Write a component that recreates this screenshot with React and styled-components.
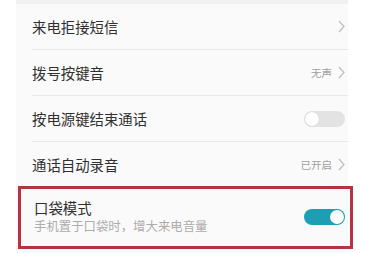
import React from 'react'
import styled, { createGlobalStyle } from 'styled-components'

const GlobalStyle = createGlobalStyle`
html, body {
  margin: 0;
  padding: 0;
  background: #ffffff;
}
body {
  font-family: "Noto Sans CJK SC", "Noto Sans", sans-serif;
}
`

const Page = styled.div`
position: relative;
width: 380px;
height: 253px;
overflow: hidden;
background: #ffffff;
`
const Panel = styled.div`
margin-left: 16px;
width: 332px;
height: 253px;
background: #fafafa;
`
const TopStrip = styled.div`
height: 4px;
background: #f1f1f1;
`
const Row = styled.div`
display: flex;
align-items: center;
justify-content: space-between;
height: 45px;
margin-left: 16px;
padding-right: 3px;
border-bottom: ${props => (props.last ? 'none' : '1px solid #e8e8e8')};
`
const TallRow = styled.div`
display: flex;
align-items: center;
justify-content: space-between;
margin-left: 18px;
padding: 11px 3px 0 0;
`
const TextBlock = styled.div`
display: flex;
flex-direction: column;
`
const Title = styled.div`
font-size: 14.4px;
line-height: 20px;
color: #303030;
`
const Subtitle = styled.div`
font-size: 12.4px;
line-height: 17px;
color: #acacac;
`
const Right = styled.div`
display: flex;
align-items: center;
gap: 6px;
`
const Value = styled.span`
font-size: 10.5px;
color: #a0a0a0;
`
const Switch = styled.div`
position: relative;
width: 41px;
height: 16px;
border-radius: 8px;
background: ${props => (props.on ? '#1c9fb3' : '#e3e3e3')};
`
const Knob = styled.div`
position: absolute;
top: 1px;
${props => (props.on ? 'right: 1px;' : 'left: 1px;')}
width: 14px;
height: 14px;
border-radius: 50%;
background: #ffffff;
box-shadow: 0 0 1px rgba(0, 0, 0, 0.2);
`
const Highlight = styled.div`
position: absolute;
left: 18px;
top: 186px;
width: 329px;
height: 57px;
border: 3px solid #b9333f;
pointer-events: none;
`

const Chevron = () => (
  <svg width="7" height="13" viewBox="0 0 7 13">
    <path d="M1 1 L6 6.5 L1 12" fill="none" stroke="#bcbcbc" strokeWidth="1.2" />
  </svg>
)

const App = () => {
  return (
    <Page>
      <GlobalStyle />
      <Panel>
        <TopStrip />
        <Row>
          <Title>来电拒接短信</Title>
          <Right><Chevron /></Right>
        </Row>
        <Row>
          <Title>拨号按键音</Title>
          <Right><Value>无声</Value><Chevron /></Right>
        </Row>
        <Row>
          <Title>按电源键结束通话</Title>
          <Switch><Knob /></Switch>
        </Row>
        <Row last>
          <Title>通话自动录音</Title>
          <Right><Value>已开启</Value><Chevron /></Right>
        </Row>
        <TallRow>
          <TextBlock>
            <Title>口袋模式</Title>
            <Subtitle>手机置于口袋时，增大来电音量</Subtitle>
          </TextBlock>
          <Switch on><Knob on /></Switch>
        </TallRow>
      </Panel>
      <Highlight />
    </Page>
  )
}

export default App
